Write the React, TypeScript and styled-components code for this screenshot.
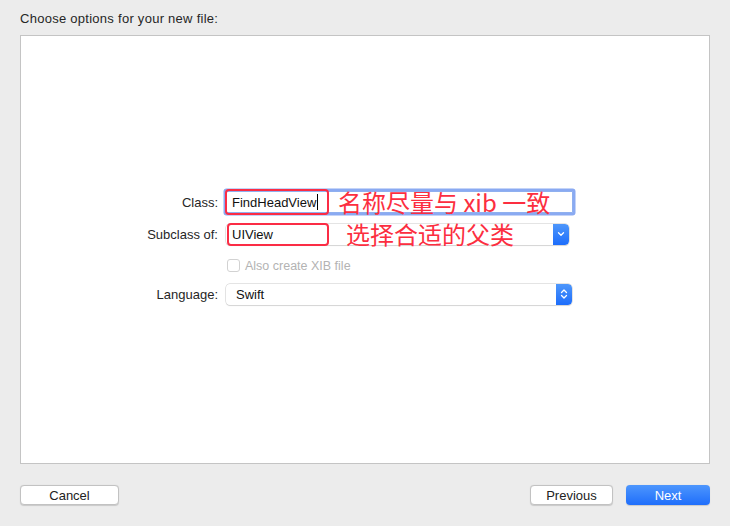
import React from "react";
import styled, { createGlobalStyle } from "styled-components";

const Global = createGlobalStyle`
  html, body { margin: 0; padding: 0; }
  body {
    background: #ececec;
    font-family: "Liberation Sans", Arial, sans-serif;
    font-size: 13px;
    color: #262626;
  }
`;

const Window = styled.div`
  width: 730px;
  height: 526px;
  display: flex;
  flex-direction: column;
  background: #ececec;
  box-sizing: border-box;
`;

const Title = styled.div`
  height: 35px;
  box-sizing: border-box;
  padding: 11px 0 0 20px;
  font-size: 13px;
  letter-spacing: 0.27px;
  line-height: 15px;
  color: #262626;
`;

const Panel = styled.div`
  margin: 0 20px;
  height: 429px;
  box-sizing: border-box;
  background: #fff;
  border: 1px solid #c4c4c4;
  display: flex;
  flex-direction: column;
  justify-content: center;
  padding-bottom: 3px;
`;

const Form = styled.div`
  display: grid;
  grid-template-columns: 197px 347px;
  grid-template-rows: 32px 32px 28px 32px;
  column-gap: 8px;
  align-items: center;
`;

const Label = styled.div`
  text-align: right;
  font-size: 13px;
  color: #262626;
`;

const Cell = styled.div<{ $shift?: number }>`
  position: relative;
  display: flex;
  align-items: center;
  height: 100%;
  box-sizing: border-box;
  padding-top: ${(p) => p.$shift ?? 0}px;
`;

const TextField = styled.div`
  width: 347px;
  height: 22px;
  box-sizing: border-box;
  border: 1px solid #8fb0ef;
  background: #fff;
  box-shadow: 0 0 0 2.5px #8aaaf2;
  border-radius: 1px;
  display: flex;
  align-items: center;
  padding-left: 5px;
  font-size: 13px;
  color: #111;
`;

const Caret = styled.span`
  display: inline-block;
  width: 1px;
  height: 16px;
  background: #000;
  margin-left: 1px;
`;

const Popup = styled.div<{ $w: number; $pad: number }>`
  width: ${(p) => p.$w}px;
  height: 21px;
  box-sizing: border-box;
  background: #fff;
  border-radius: 4px;
  box-shadow: 0 0 0 0.5px #c9c9c9, 0 1px 1px rgba(0, 0, 0, 0.12);
  display: flex;
  align-items: center;
  justify-content: space-between;
  padding-left: ${(p) => p.$pad}px;
  font-size: 13px;
  color: #111;
  overflow: hidden;
`;

const ArrowBtn = styled.div`
  width: 16px;
  height: 21px;
  background: linear-gradient(#4e97fb, #1d6dfb);
  border-radius: 0 4px 4px 0;
  display: flex;
  align-items: center;
  justify-content: center;
`;

const CheckRow = styled.div`
  display: flex;
  align-items: center;
  gap: 5px;
  padding-left: 1px;
  font-size: 12.5px;
  color: #b3b3b3;
`;

const CheckBox = styled.span`
  width: 13px;
  height: 13px;
  box-sizing: border-box;
  border: 1px solid #d2d2d2;
  border-radius: 3px;
  background: #fff;
`;

const RedBox = styled.div<{ $l: number; $t: number; $w: number; $h: number }>`
  position: absolute;
  left: ${(p) => p.$l}px;
  top: ${(p) => p.$t}px;
  width: ${(p) => p.$w}px;
  height: ${(p) => p.$h}px;
  box-sizing: border-box;
  border: 2px solid #fb2c45;
  border-radius: 4px;
  pointer-events: none;
`;

const Note = styled.div<{ $l: number; $t: number }>`
  position: absolute;
  left: ${(p) => p.$l}px;
  top: ${(p) => p.$t}px;
  font-family: "Noto Sans CJK SC", "Liberation Sans", sans-serif;
  font-size: 24px;
  line-height: 28px;
  color: #fc2e40;
  white-space: nowrap;
  pointer-events: none;
`;

const Footer = styled.div`
  flex: 1;
  display: flex;
  align-items: flex-start;
  padding: 21px 20px 0 20px;
`;

const Spacer = styled.div`
  flex: 1;
`;

const Button = styled.button<{ $w: number; $primary?: boolean }>`
  width: ${(p) => p.$w}px;
  height: 20px;
  box-sizing: border-box;
  border-radius: 4px;
  font-family: "Liberation Sans", Arial, sans-serif;
  font-size: 13px;
  padding: 0;
  margin-left: ${(p) => (p.$primary ? 13 : 0)}px;
  border: ${(p) => (p.$primary ? "none" : "0.5px solid #c2c2c2")};
  background: ${(p) => (p.$primary ? "linear-gradient(#4d96fd, #1f6efb)" : "#fff")};
  color: ${(p) => (p.$primary ? "#fff" : "#222")};
  box-shadow: 0 0.5px 1px rgba(0, 0, 0, 0.15);
`;

const ChevronDown = () => (
  <svg width="8" height="6" viewBox="0 0 8 6">
    <path d="M1.5 1.8 L4 4.2 L6.5 1.8" stroke="#fff" strokeWidth="1.3" fill="none" strokeLinecap="round" strokeLinejoin="round" />
  </svg>
);

const ChevronUpDown = () => (
  <svg width="8" height="12" viewBox="0 0 8 12">
    <path d="M1.5 4.5 L4 2 L6.5 4.5" stroke="#fff" strokeWidth="1.3" fill="none" strokeLinecap="round" strokeLinejoin="round" />
    <path d="M1.5 7.5 L4 10 L6.5 7.5" stroke="#fff" strokeWidth="1.3" fill="none" strokeLinecap="round" strokeLinejoin="round" />
  </svg>
);

export default function App() {
  return (
    <>
      <Global />
      <Window>
        <Title>Choose options for your new file:</Title>
        <Panel>
          <Form>
            <Label>Class:</Label>
            <Cell>
              <TextField>
                FindHeadView
                <Caret />
              </TextField>
              <RedBox $l={-1} $t={3} $w={104} $h={26} />
              <Note $l={112} $t={2}>名称尽量与 xib 一致</Note>
            </Cell>

            <Label>Subclass of:</Label>
            <Cell>
              <Popup $w={343} $pad={6}>
                UIView
                <ArrowBtn>
                  <ChevronDown />
                </ArrowBtn>
              </Popup>
              <RedBox $l={1} $t={5} $w={102} $h={23} />
              <Note $l={120} $t={2}>选择合适的父类</Note>
            </Cell>

            <span />
            <Cell $shift={3}>
              <CheckRow>
                <CheckBox />
                Also create XIB file
              </CheckRow>
            </Cell>

            <Label>Language:</Label>
            <Cell>
              <Popup $w={346} $pad={10}>
                Swift
                <ArrowBtn>
                  <ChevronUpDown />
                </ArrowBtn>
              </Popup>
            </Cell>
          </Form>
        </Panel>
        <Footer>
          <Button $w={99}>Cancel</Button>
          <Spacer />
          <Button $w={83}>Previous</Button>
          <Button $w={84} $primary>
            Next
          </Button>
        </Footer>
      </Window>
    </>
  );
}
